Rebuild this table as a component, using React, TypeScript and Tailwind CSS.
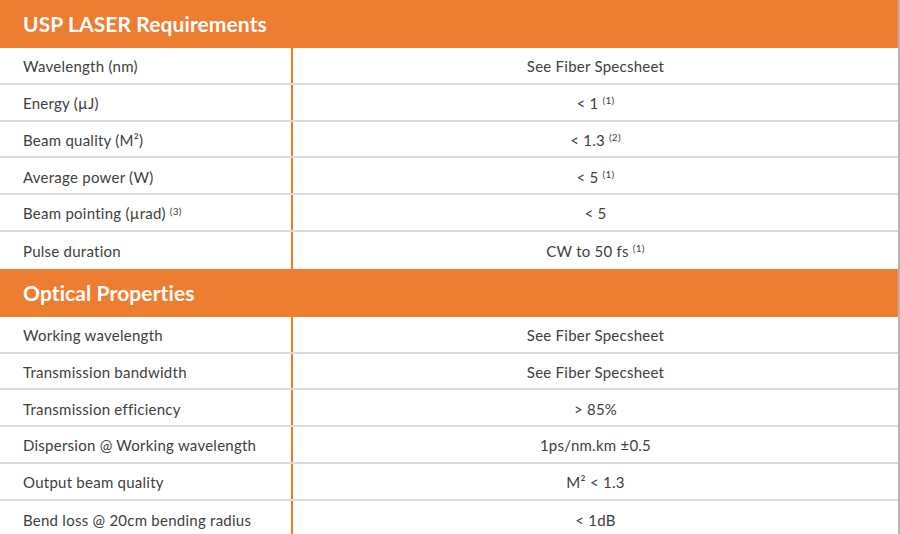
import React from 'react';

type Row = { label: React.ReactNode; value: React.ReactNode };

const Sup = ({ n }: { n: number }) => (
  <sup className="text-[10px] relative -top-[3px] ml-[4px]">({n})</sup>
);

const laser: Row[] = [
  { label: 'Wavelength (nm)', value: 'See Fiber Specsheet' },
  { label: 'Energy (µJ)', value: <>&lt; 1<Sup n={1} /></> },
  { label: 'Beam quality (M²)', value: <>&lt; 1.3<Sup n={2} /></> },
  { label: 'Average power (W)', value: <>&lt; 5<Sup n={1} /></> },
  { label: <>Beam pointing (µrad)<Sup n={3} /></>, value: '< 5' },
  { label: 'Pulse duration', value: <>CW to 50 fs<Sup n={1} /></> },
];

const optical: Row[] = [
  { label: 'Working wavelength', value: 'See Fiber Specsheet' },
  { label: 'Transmission bandwidth', value: 'See Fiber Specsheet' },
  { label: 'Transmission efficiency', value: '> 85%' },
  { label: 'Dispersion @ Working wavelength', value: '1ps/nm.km ±0.5' },
  { label: 'Output beam quality', value: 'M² < 1.3' },
  { label: 'Bend loss @ 20cm bending radius', value: '< 1dB' },
];

const Header = ({ title }: { title: string }) => (
  <div className="h-[48px] bg-[#ED7D31] flex items-center pl-[23px]">
    <h2 className="text-white font-bold text-[21px] tracking-[0.1px]">{title}</h2>
  </div>
);

const Rows = ({ rows }: { rows: Row[] }) => (
  <div>
    {rows.map((r, i) => (
      <div
        key={i}
        className={
          'h-[36.8px] flex ' + (i < rows.length - 1 ? 'border-b-2 border-[#dadada]' : '')
        }
      >
        <div className="w-[293px] pl-[23px] pt-[2px] flex items-center border-r-2 border-[#F07F22]">
          {r.label}
        </div>
        <div className="flex-1 flex items-center justify-center pt-[2px]">{r.value}</div>
      </div>
    ))}
  </div>
);

export default function App() {
  return (
    <div
      className="w-[900px] h-[534px] overflow-hidden bg-white text-[#404040] text-[15px] tracking-[0.25px] border-r-2 border-[#b5b5b5]"
      style={{ fontFamily: 'Lato, "Open Sans", sans-serif' }}
    >
      <Header title="USP LASER Requirements" />
      <Rows rows={laser} />
      <Header title="Optical Properties" />
      <Rows rows={optical} />
    </div>
  );
}
